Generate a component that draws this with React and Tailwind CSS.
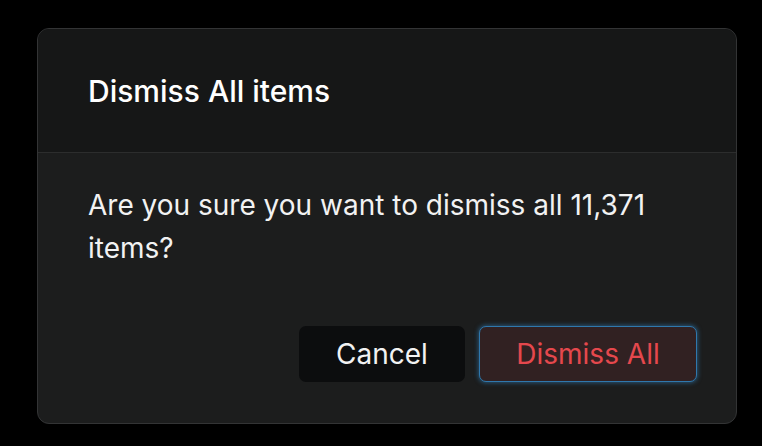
import React from "react";

const App = () => {
    return (
        <div className="w-[762px] h-[446px] bg-black pt-[28px] pl-[37px] font-['Inter',sans-serif]">
            <div className="w-[700px] h-[396px] rounded-[12px] border border-[#333435] bg-[#1c1d1d] overflow-hidden flex flex-col">
                {/* Header */}
                <div className="h-[124px] shrink-0 flex items-center px-[50px] pt-[2px] bg-[#161717] border-b border-[#2c2d2d]">
                    <h2 className="text-[30px] font-medium text-white">Dismiss All items</h2>
                </div>

                {/* Body */}
                <div className="px-[50px] pt-[31px]">
                    <p className="text-[28px] leading-[43px] text-[#f2f2f2]">
                        Are you sure you want to dismiss all 11,371 items?
                    </p>
                </div>

                {/* Footer */}
                <div className="flex justify-end gap-[14px] pr-[39px] mt-[56px]">
                    <button className="w-[166px] h-[56px] rounded-[7px] bg-[#0c0d0e] text-[28px] text-[#f2f2f2]">
                        Cancel
                    </button>
                    <button className="w-[218px] h-[56px] rounded-[7px] bg-[#312122] border border-[#2f78ad] shadow-[0_0_4px_1px_rgba(47,120,173,0.6)] text-[28px] text-[#e5484d]">
                        Dismiss All
                    </button>
                </div>
            </div>
        </div>
    );
};

export default App;
